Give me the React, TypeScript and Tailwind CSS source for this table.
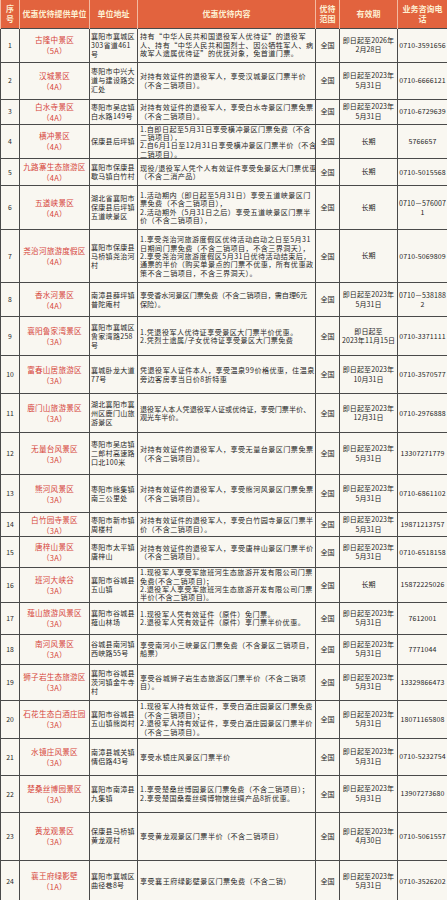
import type { FC } from 'react';

interface Row {
  no: number;
  name: string;
  level: string;
  addr: string[];
  content: string[];
  range: string;
  date: string[];
  tel: string[];
  h: string;
  tight?: boolean;
}

const d2023 = ['即日起至2023年', '5月31日'];

const rows: Row[] = [
  {
    no: 1, name: '古隆中景区', level: '（5A）', h: 'h-[34px]',
    addr: ['襄阳市襄城区', '303省道461', '号'],
    content: ['持有“中华人民共和国退役军人优待证”的退役军', '人、持有“中华人民共和国烈士、因公牺牲军人、病', '故军人遗属优待证”的优抚对象，免首道门票。'],
    range: '全国', date: ['即日起至2026年', '2月28日'], tel: ['0710-3591656'],
  },
  {
    no: 2, name: '汉城景区', level: '（4A）', h: 'h-[37px]',
    addr: ['枣阳市中兴大', '道与建设路交', '汇处'],
    content: ['对持有效证件的退役军人，享受汉城景区门票半价', '（不含二销项目）。'],
    range: '全国', date: d2023, tel: ['0710-6666121'],
  },
  {
    no: 3, name: '白水寺景区', level: '（4A）', h: 'h-[25px]',
    addr: ['枣阳市吴店镇', '白水路149号'],
    content: ['对持有效证件的退役军人，享受白水寺景区门票免票', '（不含二销项目）。'],
    range: '全国', date: d2023, tel: ['0710-6729639'],
  },
  {
    no: 4, name: '横冲景区', level: '（4A）', h: 'h-[33px]',
    addr: ['保康县后坪镇'],
    content: ['1.自即日起至5月31日享受横冲景区门票免费（不含', '二销项目），', '2.自6月1日至12月31日享受横冲景区门票半价（不含', '二销项目）。'],
    range: '全国', date: ['长期'], tel: ['5766657'],
  },
  {
    no: 5, name: '九路寨生态旅游区', level: '（4A）', h: 'h-[27px]',
    addr: ['襄阳市保康县', '歇马镇白竹村'],
    content: ['现役/退役军人凭个人有效证件享受免景区大门票优惠', '（不含二消产品）'],
    range: '全国', date: ['长期'], tel: ['0710-5015568'],
  },
  {
    no: 6, name: '五道峡景区', level: '（4A）', h: 'h-[44px]',
    addr: ['湖北省襄阳市', '保康县后坪镇', '五道峡景区'],
    content: ['1.活动期内（即日起至5月31日）享受五道峡景区门', '票免费（不含二销项目），', '2.活动期外（5月31日之后）享受五道峡景区门票半', '价（不含二销项目），'],
    range: '全国', date: ['长期'], tel: ['0710－576007', '1'],
  },
  {
    no: 7, name: '尧治河旅游度假区', level: '（4A）', h: 'h-[53px]',
    addr: ['襄阳市保康县', '马桥镇尧治河', '村'],
    content: ['1.享受尧治河旅游度假区优待活动启动之日至5月31', '日期间门票免费（不含二销项目，不含三界洞天），', '2.享受尧治河旅游度假区5月31日优待活动结束后，', '通票的半价（购买单景点的门票不优惠，所有优惠政', '策不含二销项目，不含三界洞天）。'],
    range: '全国', date: ['长期'], tel: ['0710-5069809'],
  },
  {
    no: 8, name: '香水河景区', level: '（4A）', h: 'h-[34px]', tight: true,
    addr: ['南漳县薛坪镇', '普陀庵村'],
    content: ['享受香水河景区门票免费（不含二销项目，需自理6元', '保险）。'],
    range: '全国', date: d2023, tel: ['0710－538188', '2'],
  },
  {
    no: 9, name: '襄阳鲁家湾景区', level: '（3A）', h: 'h-[39px]',
    addr: ['襄阳市襄城区', '鲁家湾路258', '号'],
    content: ['1.凭退役军人优待证享受景区大门票半价优惠。', '2.凭烈士遗属/子女优待证享受景区大门票免费'],
    range: '全国', date: ['即日起至', '2023年11月15日'], tel: ['0710-3371111'],
  },
  {
    no: 10, name: '富春山居旅游区', level: '（3A）', h: 'h-[38px]',
    addr: ['襄城卧龙大道', '77号'],
    content: ['凭退役军人证件本人，享受温泉99价格优惠，住温泉', '旁边客房享当日价8折特惠'],
    range: '全国', date: ['即日起至2023年', '10月31日'], tel: ['0710-3570577'],
  },
  {
    no: 11, name: '鹿门山旅游景区', level: '（3A）', h: 'h-[39px]', tight: true,
    addr: ['湖北襄阳市襄', '州区鹿门山旅', '游景区'],
    content: ['退役军人本人凭退役军人证或优待证，享受门票半价、', '观光车半价。'],
    range: '全国', date: ['即日起至2023年', '12月31日'], tel: ['0710-2976888'],
  },
  {
    no: 12, name: '无量台风景区', level: '（3A）', h: 'h-[42px]',
    addr: ['枣阳市吴店镇', '二郎村高速路', '口北100米'],
    content: ['对持有效证件的退役军人，享受无量台景区门票免票', '（不含二销项目）。'],
    range: '全国', date: d2023, tel: ['13307271779'],
  },
  {
    no: 13, name: '熊河风景区', level: '（3A）', h: 'h-[38px]',
    addr: ['枣阳市熊集镇', '南三公里处'],
    content: ['对持有效证件的退役军人，享受熊河风景区门票免票', '（不含二销项目）。'],
    range: '全国', date: d2023, tel: ['0710-6861102'],
  },
  {
    no: 14, name: '白竹园寺景区', level: '（3A）', h: 'h-[24px]',
    addr: ['枣阳市新市镇', '周楼村'],
    content: ['对持有效证件的退役军人，享受白竹园寺景区门票半', '价（不含二销项目）。'],
    range: '全国', date: d2023, tel: ['19871213757'],
  },
  {
    no: 15, name: '唐梓山景区', level: '（3A）', h: 'h-[31px]',
    addr: ['枣阳市太平镇', '唐梓山'],
    content: ['对持有效证件的退役军人，享受唐梓山景区门票半价', '（不含二销项目）。'],
    range: '全国', date: d2023, tel: ['0710-6518158'],
  },
  {
    no: 16, name: '班河大峡谷', level: '（3A）', h: 'h-[34px]',
    addr: ['襄阳市谷城县', '五山镇'],
    content: ['1.现役军人享受军旅班河生态旅游开发有限公司门票', '免费(不含二销项目)；', '2.退役军人享受军旅班河生态旅游开发有限公司门票', '半价(不含二销项目)。'],
    range: '全国', date: ['长期'], tel: ['15872225026'],
  },
  {
    no: 17, name: '薤山旅游风景区', level: '（3A）', h: 'h-[32px]',
    addr: ['襄阳市谷城县', '薤山林场'],
    content: ['1.现役军人凭有效证件（原件）免门票。', '2.退役军人凭有效证件（原件）享门票半价优惠。'],
    range: '全国', date: d2023, tel: ['7612001'],
  },
  {
    no: 18, name: '南河风景区', level: '（3A）', h: 'h-[30px]',
    addr: ['谷城县南河镇', '西峡路55号'],
    content: ['享受南河小三峡景区门票免费（不含景区二销项目，', '船票）'],
    range: '全国', date: d2023, tel: ['7771044'],
  },
  {
    no: 19, name: '狮子岩生态旅游区', level: '（3A）', h: 'h-[36px]',
    addr: ['襄阳市谷城县', '茨河镇金牛寺', '村'],
    content: ['享受谷城狮子岩生态旅游区门票半价（不含二销项', '目）。'],
    range: '全国', date: d2023, tel: ['13329866473'],
  },
  {
    no: 20, name: '石花生态白酒庄园', level: '（3A）', h: 'h-[38px]',
    addr: ['襄阳市谷城县', '五山镇熊岗村'],
    content: ['1.现役军人持有效证件，享受白酒庄园景区门票免费', '（不含二销项目）；', '2.退役军人持有效证件，享受白酒庄园景区门票半价', '（不含二销项目）。'],
    range: '全国', date: d2023, tel: ['18071165808'],
  },
  {
    no: 21, name: '水镜庄风景区', level: '（3A）', h: 'h-[37px]',
    addr: ['南漳县城关镇', '情侣路43号'],
    content: ['享受水镜庄风景区门票半价'],
    range: '全国', date: d2023, tel: ['0710-5232754'],
  },
  {
    no: 22, name: '楚桑丝博园景区', level: '（3A）', h: 'h-[37px]',
    addr: ['襄阳市南漳县', '九集镇'],
    content: ['1.享受楚桑丝博园景区门票免费（不含二销项目）；', '2.享受楚国桑蚕丝绸博物馆丝绸产品8折优惠。'],
    range: '全国', date: d2023, tel: ['13907273680'],
  },
  {
    no: 23, name: '黄龙观景区', level: '（3A）', h: 'h-[48px]',
    addr: ['保康县马桥镇', '黄龙观村'],
    content: ['享受黄龙观景区门票半价（不含二销项目）'],
    range: '全国', date: ['即日起至2023年', '4月30日'], tel: ['0710-5061557'],
  },
  {
    no: 24, name: '襄王府绿影壁', level: '（1A）', h: 'h-[42px]',
    addr: ['襄阳市襄城区', '曲径巷8号'],
    content: ['享受襄王府绿影壁景区门票免费（不含二销）'],
    range: '全国', date: d2023, tel: ['0710-3526202'],
  },
];

const Lines: FC<{ lines: string[] }> = ({ lines }) => (
  <>
    {lines.map((line, i) => (
      <div key={i} className="whitespace-nowrap">
        {line}
      </div>
    ))}
  </>
);

const cell = 'border border-[#4a4a4a] align-middle p-0 overflow-hidden';
const head = 'border-x border-[#f3b9a0] align-middle p-0 font-bold text-[8px] leading-[10px]';

export default function App() {
  return (
    <div className="w-[447px] bg-[#f9f7f1] font-['Noto_Sans_CJK_SC',sans-serif] text-[#262626]">
      <table className="w-[447px] table-fixed border-collapse">
        <colgroup>
          <col className="w-[19px]" />
          <col className="w-[70px]" />
          <col className="w-[48px]" />
          <col className="w-[178px]" />
          <col className="w-[24px]" />
          <col className="w-[58px]" />
          <col className="w-[50px]" />
        </colgroup>
        <thead>
          <tr className="h-[28px] bg-[#e2633e] text-[#fdf0d3]">
            <th className={head}>序<br />号</th>
            <th className={head}>优惠优待提供单位</th>
            <th className={head}>单位地址</th>
            <th className={head}>优惠优待内容</th>
            <th className={head}>优待<br />范围</th>
            <th className={head}>有效期</th>
            <th className={head}>业务咨询电<br />话</th>
          </tr>
        </thead>
        <tbody className="text-[7.1px] leading-[8.4px] tracking-[0.45px]">
          {rows.map((row) => (
            <tr key={row.no} className={row.h}>
              <td className={`${cell} text-center text-[6.8px] tracking-normal`}>{row.no}</td>
              <td className={`${cell} text-center text-[7.6px] leading-[11px] tracking-[0.2px] text-[#d6443a]`}>
                <div className="whitespace-nowrap">{row.name}</div>
                <div className="whitespace-nowrap">{row.level}</div>
              </td>
              <td className={`${cell} px-[1px] text-[7px] leading-[9px] tracking-[0.3px]`}>
                <Lines lines={row.addr} />
              </td>
              <td className={`${cell} px-[2px] ${row.tight ? 'tracking-[0px]' : ''}`}>
                <Lines lines={row.content} />
              </td>
              <td className={`${cell} text-center tracking-normal`}>{row.range}</td>
              <td className={`${cell} text-center text-[7px] leading-[9.5px] tracking-[0.1px]`}>
                <Lines lines={row.date} />
              </td>
              <td className={`${cell} text-center text-[7px] leading-[9px] tracking-[0.1px]`}>
                <Lines lines={row.tel} />
              </td>
            </tr>
          ))}
        </tbody>
      </table>
    </div>
  );
}
